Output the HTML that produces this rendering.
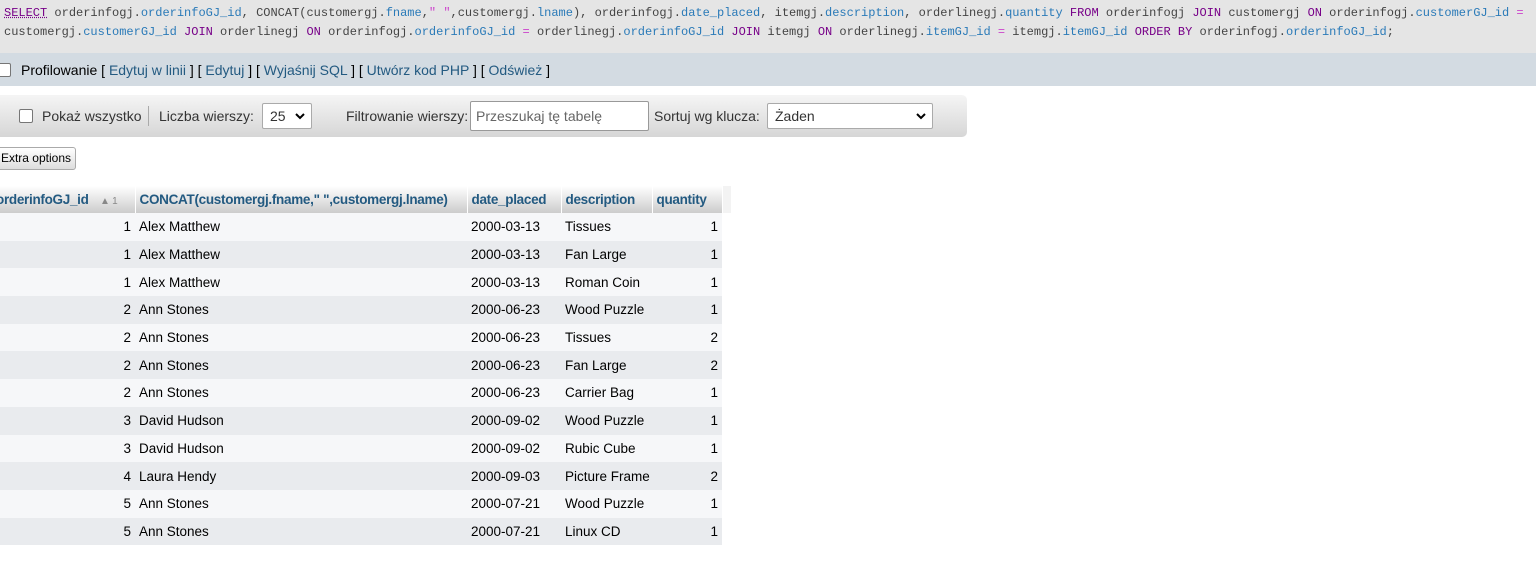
<!DOCTYPE html>
<html><head><meta charset="utf-8"><style>
body{margin:0;width:1536px;height:561px;overflow:hidden;background:#fff;font-family:"Liberation Sans",sans-serif;font-size:13px;color:#000;position:relative}
.sql{position:absolute;left:0;top:0;width:1536px;height:53px;background:#e5e5e5;font-family:"Liberation Mono",monospace;font-size:12px;color:#444}
.sql div{position:absolute;left:4px;white-space:nowrap}
.k{color:#708}.v{color:#2a7ab8}.o{color:#c4c}
.prof{position:absolute;left:0;top:53px;width:1536px;height:33px;background:#d3dbe2;font-size:14px}
.prof span.l{color:#235a81}
.tb{position:absolute;left:0;top:95px;width:967px;height:42px;background:linear-gradient(#f5f5f5,#d6d6d6);border-radius:0 5px 5px 0;font-size:14px;color:#333}
.tb .t{position:absolute;top:13px}
.cb{position:absolute;width:12px;height:12px;border:1px solid #767676;border-radius:2px;background:#fff}
.sel{position:absolute;background:#fff;border:1px solid #aaa;border-radius:2px;height:24px}
.btn{position:absolute;left:-4px;top:147px;width:78px;height:21px;border:1px solid #aaa;border-radius:3px;background:linear-gradient(#fff,#ddd);font-size:12px;line-height:21px;text-align:center}
table{position:absolute;left:-8px;top:186px;border-collapse:collapse;font-size:13.5px;table-layout:fixed;width:739px}
th{height:27px;padding:0 4px;text-align:left;color:#235a81;background:linear-gradient(#fff,#ccc);border-right:1px solid #fff;font-weight:bold;white-space:nowrap;overflow:hidden;letter-spacing:-0.3px}
td{height:27.7px;padding:0 4px;white-space:nowrap;overflow:hidden}
tr.a td{background:#f6f7f9}tr.b td{background:#e9ebee}
.r{text-align:right}
</style></head><body>
<div class="sql">
<div style="top:6px"><span class="k" style="text-decoration:underline dotted">SELECT</span> orderinfogj.<span class="v">orderinfoGJ_id</span>, CONCAT(customergj.<span class="v">fname</span>,<span class="o">" "</span>,customergj.<span class="v">lname</span>), orderinfogj.<span class="v">date_placed</span>, itemgj.<span class="v">description</span>, orderlinegj.<span class="v">quantity</span> <span class="k">FROM</span> orderinfogj <span class="k">JOIN</span> customergj <span class="k">ON</span> orderinfogj.<span class="v">customerGJ_id</span> <span class="o">=</span></div>
<div style="top:25px">customergj.<span class="v">customerGJ_id</span> <span class="k">JOIN</span> orderlinegj <span class="k">ON</span> orderinfogj.<span class="v">orderinfoGJ_id</span> <span class="o">=</span> orderlinegj.<span class="v">orderinfoGJ_id</span> <span class="k">JOIN</span> itemgj <span class="k">ON</span> orderlinegj.<span class="v">itemGJ_id</span> <span class="o">=</span> itemgj.<span class="v">itemGJ_id</span> <span class="k">ORDER BY</span> orderinfogj.<span class="v">orderinfoGJ_id</span>;</div>
</div>
<div class="prof"><div class="cb" style="left:-3px;top:10px"></div><div style="position:absolute;left:21px;top:9px">Profilowanie [ <span class="l">Edytuj w linii</span> ] [ <span class="l">Edytuj</span> ] [ <span class="l">Wyjaśnij SQL</span> ] [ <span class="l">Utwórz kod PHP</span> ] [ <span class="l">Odśwież</span> ]</div></div>
<div class="tb">
<div class="cb" style="left:19px;top:14px"></div>
<div class="t" style="left:42px">Pokaż wszystko</div>
<div style="position:absolute;left:148px;top:11px;width:1px;height:20px;background:#aaa"></div>
<div class="t" style="left:159px">Liczba wierszy:</div>
<div class="sel" style="left:262px;top:8px;width:48px"><span style="position:absolute;left:7px;top:4px">25</span><svg style="position:absolute;right:6px;top:8px" width="10" height="8"><path d="M1 2l4 4 4-4" stroke="#000" stroke-width="2" fill="none"/></svg></div>
<div class="t" style="left:346px">Filtrowanie wierszy:</div>
<div class="sel" style="left:470px;top:6px;width:177px;height:28px;border-color:#999"><span style="position:absolute;left:5px;top:6px;color:#666">Przeszukaj tę tabelę</span></div>
<div class="t" style="left:654px">Sortuj wg klucza:</div>
<div class="sel" style="left:767px;top:8px;width:164px"><span style="position:absolute;left:7px;top:4px">Żaden</span><svg style="position:absolute;right:6px;top:8px" width="10" height="8"><path d="M1 2l4 4 4-4" stroke="#000" stroke-width="2" fill="none"/></svg></div>
</div>
<div class="btn">Extra options</div>
<table>
<colgroup><col style="width:143px"><col style="width:332px"><col style="width:94px"><col style="width:91px"><col style="width:70px"><col style="width:9px"></colgroup>
<tr><th>orderinfoGJ_id <span style="font-weight:normal;font-size:10px;color:#888;margin-left:8px">▲ 1</span></th><th>CONCAT(customergj.fname," ",customergj.lname)</th><th>date_placed</th><th>description</th><th>quantity</th><th style="background:#f3f3f3;padding:0"></th></tr>
<tr class="a"><td class="r">1</td><td>Alex Matthew</td><td>2000-03-13</td><td>Tissues</td><td class="r">1</td></tr>
<tr class="b"><td class="r">1</td><td>Alex Matthew</td><td>2000-03-13</td><td>Fan Large</td><td class="r">1</td></tr>
<tr class="a"><td class="r">1</td><td>Alex Matthew</td><td>2000-03-13</td><td>Roman Coin</td><td class="r">1</td></tr>
<tr class="b"><td class="r">2</td><td>Ann Stones</td><td>2000-06-23</td><td>Wood Puzzle</td><td class="r">1</td></tr>
<tr class="a"><td class="r">2</td><td>Ann Stones</td><td>2000-06-23</td><td>Tissues</td><td class="r">2</td></tr>
<tr class="b"><td class="r">2</td><td>Ann Stones</td><td>2000-06-23</td><td>Fan Large</td><td class="r">2</td></tr>
<tr class="a"><td class="r">2</td><td>Ann Stones</td><td>2000-06-23</td><td>Carrier Bag</td><td class="r">1</td></tr>
<tr class="b"><td class="r">3</td><td>David Hudson</td><td>2000-09-02</td><td>Wood Puzzle</td><td class="r">1</td></tr>
<tr class="a"><td class="r">3</td><td>David Hudson</td><td>2000-09-02</td><td>Rubic Cube</td><td class="r">1</td></tr>
<tr class="b"><td class="r">4</td><td>Laura Hendy</td><td>2000-09-03</td><td>Picture Frame</td><td class="r">2</td></tr>
<tr class="a"><td class="r">5</td><td>Ann Stones</td><td>2000-07-21</td><td>Wood Puzzle</td><td class="r">1</td></tr>
<tr class="b"><td class="r">5</td><td>Ann Stones</td><td>2000-07-21</td><td>Linux CD</td><td class="r">1</td></tr>
</table>
</body></html>
